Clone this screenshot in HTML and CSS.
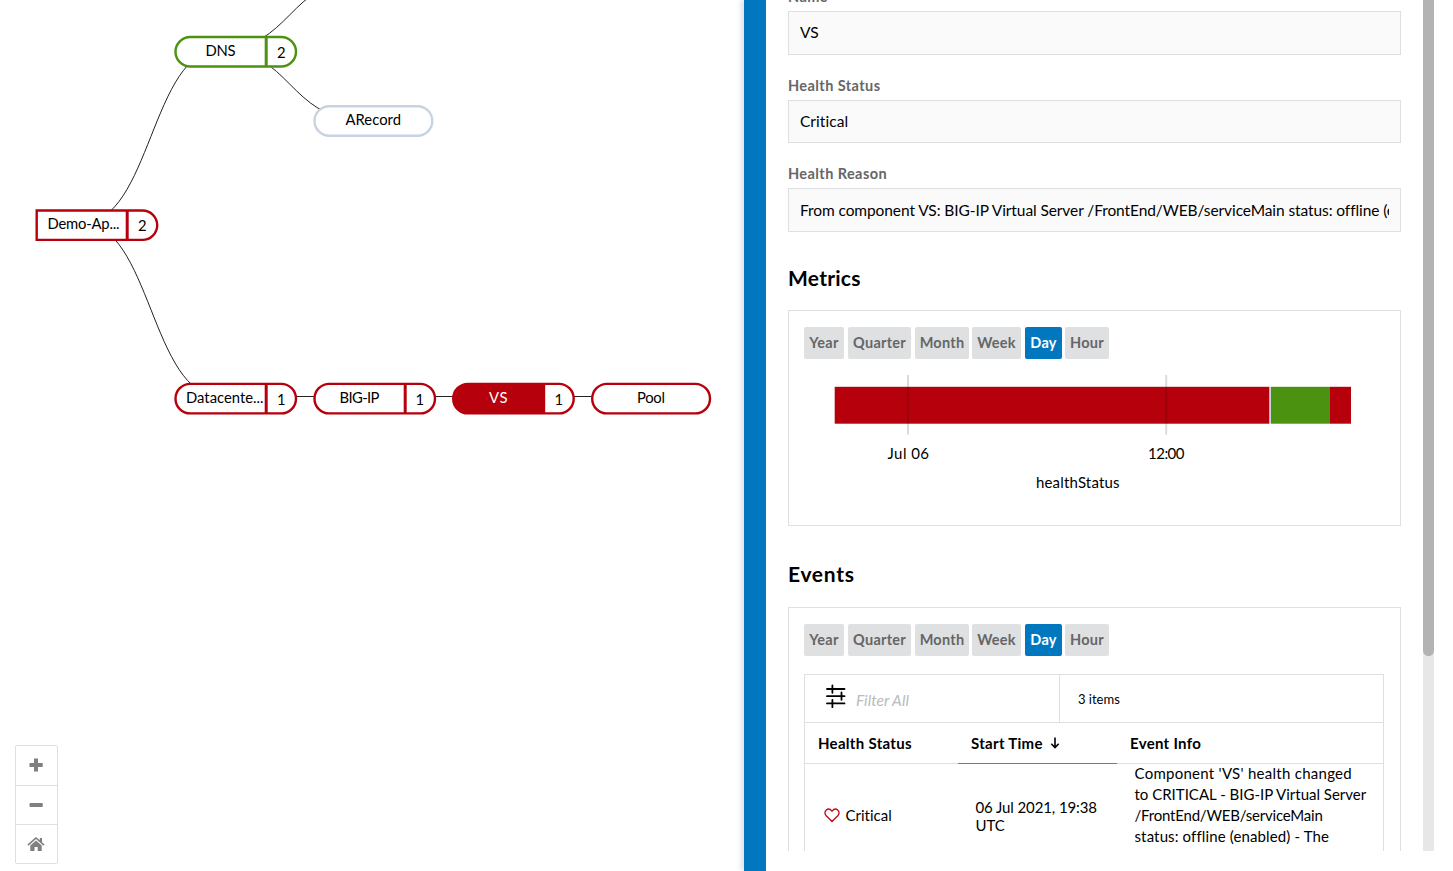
FILE: index.html
```html
<!DOCTYPE html>
<html lang="en">
<head>
<meta charset="utf-8">
<title>Application topology</title>
<link rel="stylesheet" href="styles.css">
</head>
<body>
<div class="app">
  <main class="canvas">
    <svg class="graph" width="744" height="871" viewBox="0 0 744 871">
      <g class="links">
        <path d="M82 223C151 223 151 49.500 220 49.500"/>
        <path d="M82 223C151 223 151 396.500 220 396.500"/>
        <path d="M220 49.500C290 49.500 290 -20 359 -20"/>
        <path d="M220 49.500C290 49.500 290 119 359 119"/>
        <path d="M220 396.500H650"/>
      </g>
      <g class="node critical">
        <path d="M36.700 210.500H142.500A14.700 14.700 0 0 1 142.500 239.900H36.700Z"/>
        <path class="divider" d="M127.200 210.500V240"/>
        <text x="47.500" y="229.200" textLength="72">Demo-Ap...</text><text x="138" y="231.300" textLength="8.500">2</text>
      </g>
      <g class="node healthy">
        <rect x="175.500" y="37" width="120.500" height="29.500" rx="14.750"/>
        <path class="divider" d="M266.200 37V66.500"/>
        <text x="205.500" y="56.200" textLength="30">DNS</text><text x="277" y="58.300" textLength="8.500">2</text>
      </g>
      <g class="node neutral">
        <rect x="314.500" y="106.200" width="117.800" height="29.500" rx="14.750"/>
        <text x="345.500" y="125.200" textLength="55.500">ARecord</text>
      </g>
      <g class="node critical">
        <rect x="175.500" y="383.900" width="120.500" height="29.500" rx="14.750"/>
        <path class="divider" d="M266.200 384V413.500"/>
        <text x="186" y="403.200" textLength="77.500">Datacente...</text><text x="277" y="405.200">1</text>
      </g>
      <g class="node critical">
        <rect x="314.500" y="383.900" width="120.500" height="29.500" rx="14.750"/>
        <path class="divider" d="M405.200 384V413.500"/>
        <text x="339.500" y="403.200" textLength="40">BIG-IP</text><text x="415.500" y="405.200">1</text>
      </g>
      <g class="node critical selected">
        <rect x="453.200" y="383.900" width="120.500" height="29.500" rx="14.750"/>
        <path class="fill" d="M545.200 383.900H468A14.750 14.750 0 0 0 468 413.400H545.200Z"/>
        <text class="light" x="489" y="403.200" textLength="18.500">VS</text><text x="554.500" y="405.200">1</text>
      </g>
      <g class="node critical">
        <rect x="592.200" y="383.900" width="117.800" height="29.500" rx="14.750"/>
        <text x="637" y="403.200" textLength="28">Pool</text>
      </g>
    </svg>
    <div class="zoom-controls">
      <button class="zoom-in" aria-label="Zoom in"><svg width="20" height="20"><path d="M8 3.500h4v4.500h4.700v4H12v4.500H8V12H3.500V8H8z"/></svg></button>
      <button class="zoom-out" aria-label="Zoom out"><svg width="20" height="20"><rect x="3.500" y="8" width="13.300" height="4" rx="1"/></svg></button>
      <button class="zoom-home" aria-label="Reset view"><svg width="20" height="20"><path d="M10 3l3.800 3.300V4h2.200v4.200l2.600 2.300-1.100 1.200L10 5.100l-7.500 6.600-1.100-1.200L9 3.700zM10 6.400l5.700 5V17h-4v-4H8.500v4H4.300v-5.600z"/></svg></button>
    </div>
  </main>
  <div class="splitter"></div>
  <aside class="panel">
    <div class="details">
      <label class="label">Name</label>
      <div class="field value"><span>VS</span></div>
      <label class="label">Health Status</label>
      <div class="field value short"><span>Critical</span></div>
      <label class="label">Health Reason</label>
      <div class="field reason"><span>From component VS: BIG-IP Virtual Server /FrontEnd/WEB/serviceMain status: offline (enabled)</span></div>

      <h2 class="heading">Metrics</h2>
      <section class="box metrics">
        <div class="ranges"><button class="year">Year</button><button class="quarter">Quarter</button><button class="month">Month</button><button class="week">Week</button><button class="day active">Day</button><button class="hour">Hour</button></div>
        <svg class="chart" width="580" height="150" viewBox="804 359 580 150">
          <rect class="bad" x="834.700" y="386.800" width="434.800" height="36.900"/>
          <rect class="unknown" x="1269.500" y="386.800" width="1.500" height="36.900"/>
          <rect class="good" x="1271" y="386.800" width="59" height="36.900"/>
          <rect class="bad" x="1330" y="386.800" width="21" height="36.900"/>
          <rect class="tick" x="907" y="375" width="2" height="59.500"/>
          <rect class="tick" x="1165.200" y="375" width="2" height="59.500"/>
          <text x="887.500" y="459.300" textLength="41.500">Jul 06</text>
          <text x="1148" y="459.300" textLength="36.500">12:00</text>
          <text x="1036" y="488.300" textLength="83.500">healthStatus</text>
        </svg>
      </section>

      <h2 class="heading events-heading">Events</h2>
      <section class="box events">
        <div class="ranges"><button class="year">Year</button><button class="quarter">Quarter</button><button class="month">Month</button><button class="week">Week</button><button class="day active">Day</button><button class="hour">Hour</button></div>
        <div class="table">
          <div class="toolbar">
            <div class="filter">
              <svg width="22" height="26" viewBox="825 684 22 26"><path d="M827 689H844.500M827 696.200H844.500M827 703.400H844.500M832.400 685.500V692.800M841.500 692.500V699.800M832.400 700V707.200"/></svg>
              <span>Filter All</span>
            </div>
            <div class="count"><span>3 items</span></div>
          </div>
          <div class="row head">
            <div class="cell"><span class="h-status">Health Status</span></div>
            <div class="cell sorted"><span class="h-start">Start Time</span><svg width="10" height="14"><path d="M5 1.500V11.500M1.300 7.800L5 11.500L8.700 7.800"/></svg></div>
            <div class="cell"><span class="h-info">Event Info</span></div>
          </div>
          <div class="row entry">
            <div class="status"><svg width="16" height="15"><path d="M8 13.500L2.200 7.800C.5 6 .6 3.400 2.300 2C4 .6 6.300 1.100 8 3.100C9.700 1.100 12 .6 13.700 2C15.400 3.400 15.500 6 13.800 7.800Z"/></svg><span>Critical</span></div>
            <div class="time"><span class="t-date">06 Jul 2021, 19:38</span><br><span class="t-zone">UTC</span></div>
            <div class="info"><span class="i1">Component 'VS' health changed</span><br><span class="i2">to CRITICAL - BIG-IP Virtual Server</span><br><span class="i3">/FrontEnd/WEB/serviceMain</span><br><span class="i4">status: offline (enabled) - The</span></div>
          </div>
        </div>
      </section>
    </div>
    <div class="scrollbar"><div class="thumb"></div></div>
  </aside>
</div>
</body>
</html>
```
FILE: styles.css
```css
* { box-sizing: border-box; }
body { margin: 0; background: #fff; color: #000; font: 15px/20px Lato, "Liberation Sans", sans-serif; }
button { font: inherit; padding: 0; border: 0; }
svg { display: block; flex: none; }
span { white-space: nowrap; }
.app { display: flex; width: 1453px; height: 871px; overflow: hidden; }

/* Topology canvas */
.canvas { position: relative; width: 744px; height: 871px; flex: none; }
.links path { fill: none; stroke: #222; stroke-width: 1; }
.node rect, .node path { fill: #fff; stroke-width: 2.4; }
.node.critical rect, .node.critical path { stroke: #b6000c; }
.node.healthy rect, .node.healthy path { stroke: #4c9211; }
.node.neutral rect { stroke: #c7d3e1; }
.node .divider { stroke-width: 3; }
.node.selected .fill { fill: #b6000c; stroke: none; }
.node text { font-size: 14.8px; }
.node .light { fill: #fff; }
.zoom-controls { position: absolute; left: 15px; top: 745px; display: flex; flex-direction: column; width: 43px; height: 119px; border: 1px solid #dedfe0; border-radius: 2px; }
.zoom-controls button { display: flex; align-items: center; justify-content: center; height: 39px; background: #fff; padding: 0 1px 1px 0; }
.zoom-controls button + button { border-top: 1px solid #dedfe0; }
.zoom-controls svg { fill: #808080; }
.splitter { width: 22px; flex: none; background: #0077bf; box-shadow: -3px 0 5px rgba(0, 0, 0, .12); z-index: 1; clip-path: inset(0 0 0 -10px); }

/* Detail panel */
.panel { display: flex; justify-content: space-between; width: 668px; height: 851px; overflow: hidden; padding-left: 22px; background: #fff; }
.details { width: 613px; margin-top: -34px; flex: none; }
.label { display: block; height: 45px; padding-top: 21px; font-weight: 700; color: #666; font-size: 14.5px; letter-spacing: .42px; }
.field { display: flex; align-items: center; height: 44px; border: 1px solid #dedfe0; background: #fafafa; padding: 0 11px; overflow: hidden; font-size: 15.5px; }
.field.short { height: 43px; }
.field.value { padding-bottom: 2px; letter-spacing: .05px; }
.field.reason { letter-spacing: -.09px; }
.field span { flex: 1; overflow: hidden; }
.heading { margin: 0; height: 78px; padding-top: 32px; font-size: 21px; line-height: 28px; font-weight: 700; letter-spacing: .25px; }
.events-heading { height: 81px; padding-top: 34px; letter-spacing: .7px; }
.box { border: 1px solid #dedfe0; padding: 16px 16px 0 15px; }
.metrics { height: 216px; }
.events { height: 400px; }
.ranges { display: flex; height: 32px; }
.ranges button { height: 32px; border-radius: 2px; background: #dfe0e2; color: #666; font-weight: 700; font-size: 14.5px; letter-spacing: .25px; margin-right: 4px; }
.ranges .year { width: 40px; }
.ranges .quarter { width: 63px; }
.ranges .month { width: 54px; margin-right: 3px; }
.ranges .week { width: 49px; }
.ranges .day { width: 37px; margin-right: 3px; }
.ranges .hour { width: 44px; }
.ranges .active { background: #0077bf; color: #fff; }
.chart text { font-size: 15px; }
.bad { fill: #b6000c; }
.good { fill: #4c9211; }
.unknown { fill: #c7d3e1; }
.tick { fill: rgba(0, 0, 0, .14); }

/* Events table */
.table { margin-top: 18px; width: 580px; height: 300px; border: 1px solid #dedfe0; }
.toolbar { display: flex; height: 48px; border-bottom: 1px solid #dedfe0; }
.filter { display: flex; width: 255px; padding: 9px 0 0 20px; border-right: 1px solid #dedfe0; font-style: italic; font-size: 15.5px; color: #bbb; }
.filter span { margin: 6px 0 0 9px; }
.count { padding: 14px 0 0 18px; font-size: 13px; }
.row { display: grid; grid-template-columns: 153px 159px 266px; }
.head { height: 41px; font-weight: 700; letter-spacing: .3px; }
.cell { display: flex; align-items: center; padding-left: 13px; border-bottom: 1px solid #dedfe0; }
.sorted { border-color: #2593c4; }
.sorted svg { margin-left: 7px; fill: none; stroke: #000; stroke-width: 1.6; }
.filter path { stroke: #000; stroke-width: 1.8; stroke-linecap: round; }
.status { display: flex; padding: 41px 0 0 19px; }
.status svg { margin-top: 3px; fill: none; stroke: #c20d1a; stroke-width: 1.4; }
.status span { margin-left: 5.5px; letter-spacing: .01px; }
.time { padding: 34px 0 0 17.5px; line-height: 18px; letter-spacing: -.1px; }
.info { margin-top: -1px; padding-left: 17.5px; line-height: 21px; }
.i1 { letter-spacing: .27px; }
.i3 { letter-spacing: -.2px; }
.i4 { letter-spacing: .13px; }

.scrollbar { width: 11px; height: 851px; background: #e7e7e7; }
.thumb { height: 656px; background: #b3b3b3; border-radius: 0 0 5.5px 5.5px; }
```
